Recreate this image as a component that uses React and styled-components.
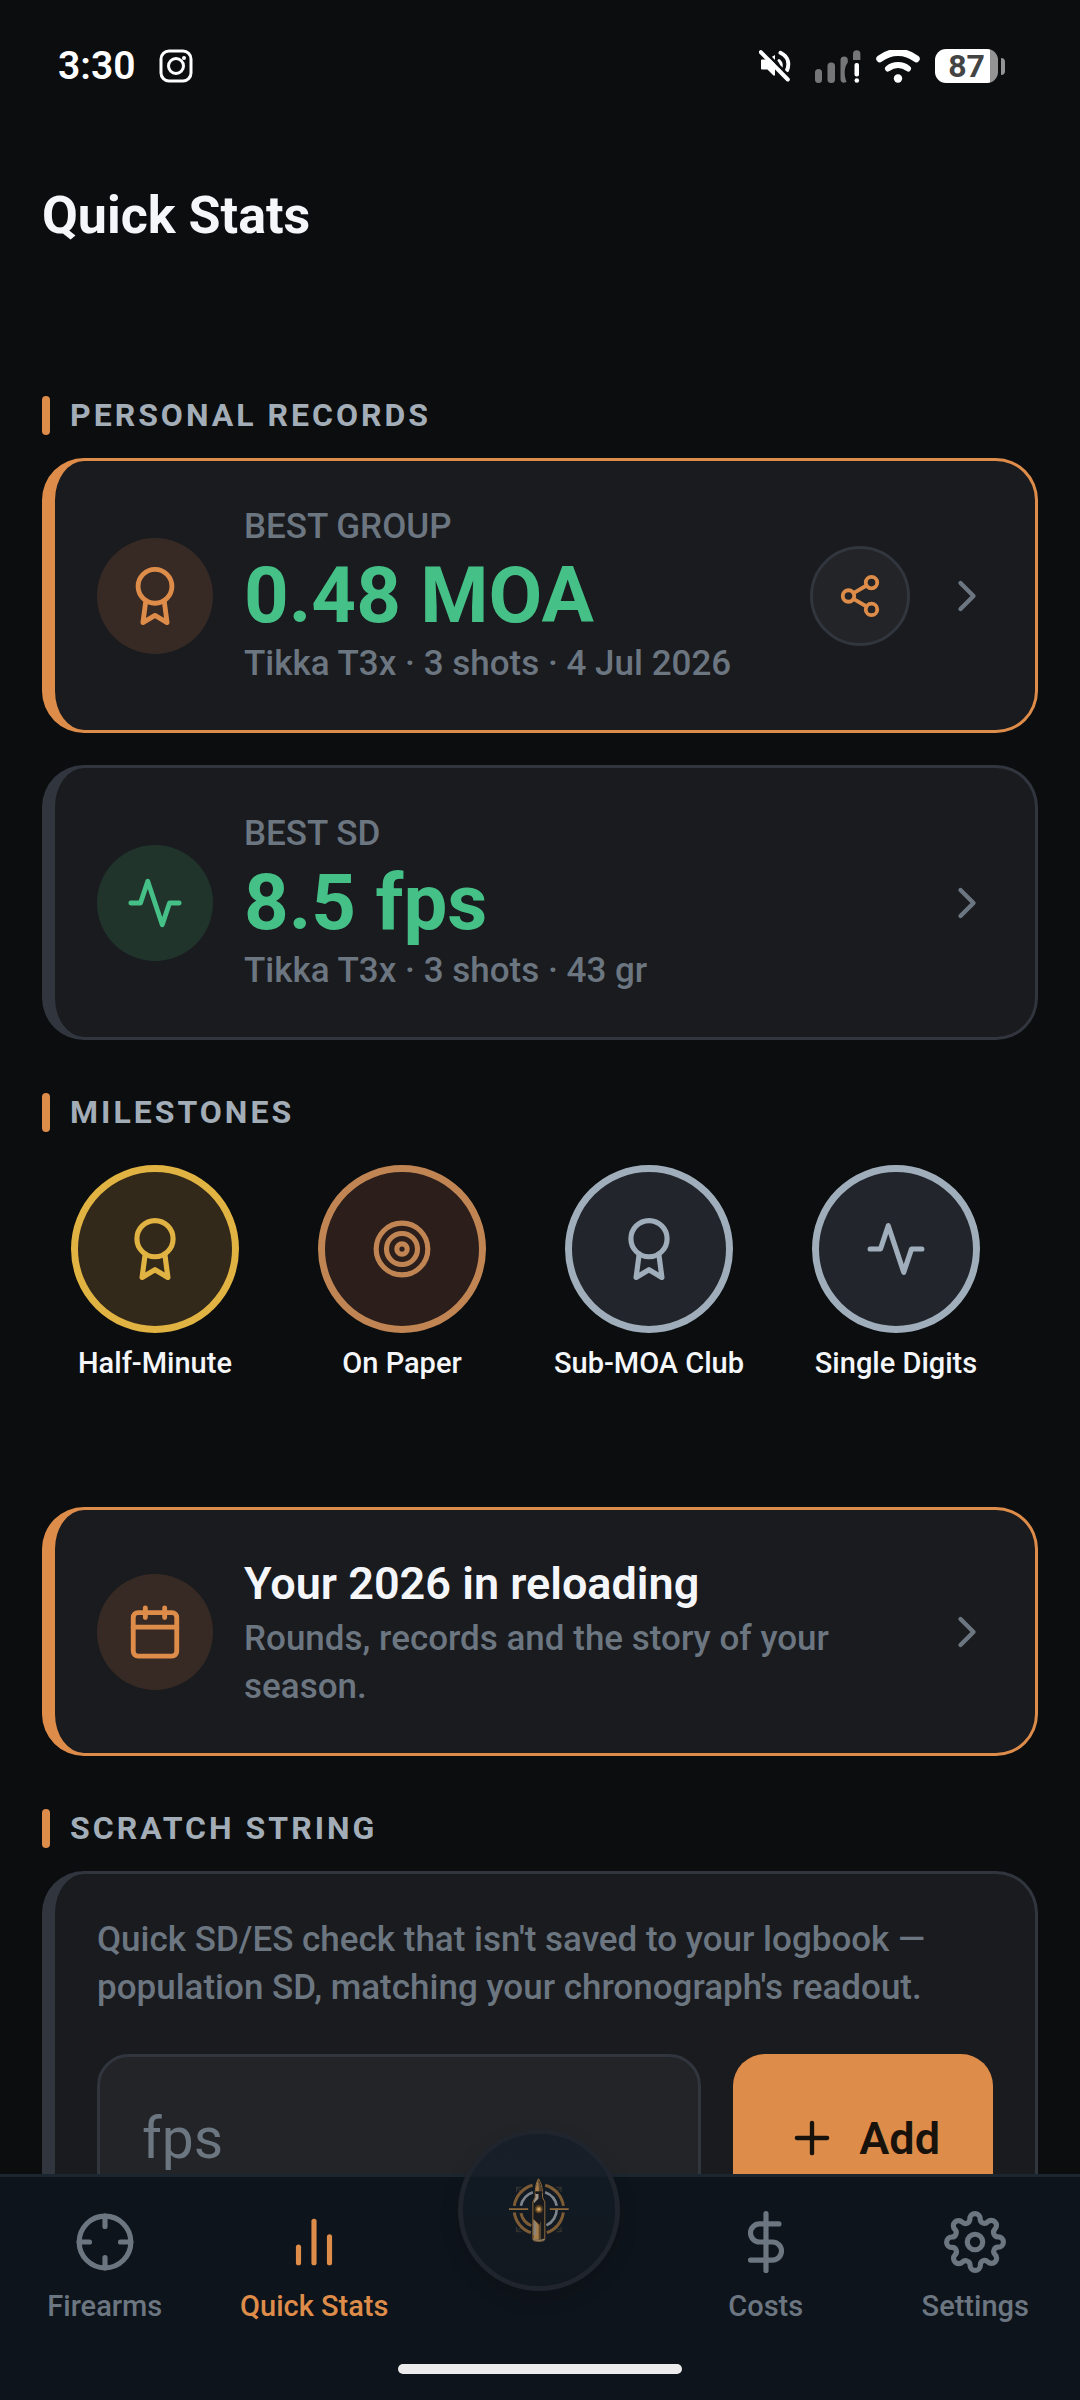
import React from 'react';
import styled, { createGlobalStyle } from 'styled-components';
import {
  FiActivity,
  FiAward,
  FiBarChart2,
  FiCalendar,
  FiChevronRight,
  FiCrosshair,
  FiDollarSign,
  FiPlus,
  FiSettings,
  FiShare2,
  FiTarget,
} from 'react-icons/fi';

const milestones = [
  { label: 'Half-Minute', icon: FiAward, color: '#e1b342', fill: '#33291a' },
  { label: 'On Paper', icon: FiTarget, color: '#c08552', fill: '#2b1e1b' },
  { label: 'Sub-MOA Club', icon: FiAward, color: '#a0aebc', fill: '#22262c' },
  { label: 'Single Digits', icon: FiActivity, color: '#a0aebc', fill: '#22262c' },
];

const InstagramGlyph = () => (
  <svg width="34" height="34" viewBox="0 0 34 34" fill="none" stroke="#fff" strokeWidth="3" aria-hidden="true">
    <rect x="2" y="2" width="30" height="30" rx="8" />
    <circle cx="17" cy="17" r="7.5" />
    <circle cx="25" cy="9" r="2" fill="#fff" stroke="none" />
  </svg>
);

const MutedGlyph = () => (
  <svg width="32" height="32" viewBox="0 0 32 32" fill="none" aria-hidden="true">
    <path d="M3 9.500h5.500L16 5v20.500h-1.500L8.500 19.500H3a1 1 0 0 1-1-1v-8a1 1 0 0 1 1-1z" fill="#fff" />
    <path d="M20 10.500a7 7 0 0 1 1.500 8" stroke="#fff" strokeWidth="3" strokeLinecap="round" />
    <path d="M21.500 2.800c7 3.500 9.500 10 6.500 17.500" stroke="#fff" strokeWidth="4" strokeLinecap="round" />
    <path d="M4 0L33 29" stroke="#0b0d0f" strokeWidth="3" />
    <path d="M1.800 2.200L28.800 29.500" stroke="#fff" strokeWidth="4" strokeLinecap="round" />
  </svg>
);

const SignalGlyph = () => (
  <svg width="46" height="33" viewBox="0 0 46 33" aria-hidden="true">
    <g fill="#757677">
      <rect x="0" y="19" width="7" height="14" rx="3.500" />
      <rect x="12.500" y="12.500" width="7.500" height="20.500" rx="3.500" />
      <path d="M25.500 9.500a3.700 3.700 0 0 1 7.300 0v3c-3.800 5-4 12-1.300 19.500-3.500 1.500-6 .500-6-3z" />
      <path d="M38 4a3.700 3.700 0 0 1 7.400 0v6H38z" />
    </g>
    <rect x="39.500" y="13" width="4.500" height="13.500" rx="2" fill="#fff" />
    <circle cx="41.800" cy="30.500" r="2.300" fill="#fff" />
  </svg>
);

const WifiGlyph = () => (
  <svg width="44" height="33" viewBox="0 0 44 33" fill="none" stroke="#fff" strokeLinecap="round" aria-hidden="true">
    <path d="M3.800 8.800a29 29 0 0 1 36.400 0" strokeWidth="7" />
    <path d="M12 18.500a16 16 0 0 1 20 0" strokeWidth="6" />
    <circle cx="22" cy="28.500" r="4.200" fill="#fff" stroke="none" />
  </svg>
);

const BulletLogo = () => (
  <svg width="60" height="64" viewBox="177 178 181 193" fill="none" aria-hidden="true">
    <g stroke="#3a3732" strokeWidth="3">
      <path d="M198 206l22 18M336 206l-22 18M198 340l22-18M336 340l-22-18" />
      <path d="M200 220v-14h14M334 220v-14h-14M200 326v14h14M334 326v14h-14" />
    </g>
    <g stroke="#7d5c35" strokeWidth="9">
      <path d="M193 262A75 75 0 0 1 248 200" />
      <path d="M286 200A75 75 0 0 1 341 262" />
      <path d="M193 282A75 75 0 0 0 243 343" />
      <path d="M291 343A75 75 0 0 0 341 282" />
      <path d="M213 284A55 55 0 0 0 244 322" />
    </g>
    <g stroke="#7d848b" strokeWidth="8">
      <path d="M213 262A55 55 0 0 1 249 221" />
      <path d="M286 221A55 55 0 0 1 321 262" />
      <path d="M321 270A55 55 0 0 1 290 321" />
    </g>
    <path d="M177 272h58M300 272h57" stroke="#8f6a3c" strokeWidth="5" />
    <path
      d="M266 180c-6 10-9 22-10 40v16l-7 14v112c0 5 6 7 18 7s18-2 18-7V250l-7-14v-16c-1-18-6-30-12-40z"
      fill="#17191c"
      stroke="#8f6a3c"
      strokeWidth="3"
    />
    <path d="M266 182c-5 10-8 22-9 37h11z" fill="#a67e4b" />
    <path d="M267 186c5 10 8 20 9 33h-9z" fill="#5d4730" />
    <path d="M256 221h22" stroke="#17191c" strokeWidth="4" />
    <path d="M257 226h9v14l-14 14v-6l5-12z" fill="#a0968a" />
    <path d="M251 302l16 16v46c-9 0-14-1-16-3z" fill="#a67e4b" />
    <path d="M251 306l8 10v34h-8z" fill="#8d8377" />
    <path d="M268 322l5-14v54h-5z" fill="#6d5230" />
    <path d="M250 363c8 4 26 4 34 0" stroke="#8f7a5c" strokeWidth="5" />
    <circle cx="267" cy="272" r="13" fill="#4a3820" />
    <circle cx="267" cy="272" r="8" fill="#9c733c" />
    <circle cx="267" cy="272" r="4" fill="#d1a869" />
  </svg>
);

const App = () => {
  return (
    <Screen>
      <GlobalStyle />

      <ScrollArea>
        <StatusBar>
          <StatusGroup>
            <Clock>3:30</Clock>
            <InstagramGlyph />
          </StatusGroup>
          <StatusIcons>
            <MutedGlyph />
            <SignalGlyph />
            <WifiGlyph />
            <Battery>
              <BatteryBody>87</BatteryBody>
              <BatteryTip />
            </Battery>
          </StatusIcons>
        </StatusBar>

        <Header>
          <PageTitle>Quick Stats</PageTitle>
        </Header>

        <Section>
          <SectionTitle>Personal Records</SectionTitle>
          <CardList>
            <Card $accent>
              <IconCircle $color="#de8c49" $fill="#372a24">
                <FiAward size={58} />
              </IconCircle>
              <CardBody>
                <Caption>BEST GROUP</Caption>
                <Value>0.48 MOA</Value>
                <Detail>Tikka T3x · 3 shots · 4 Jul 2026</Detail>
              </CardBody>
              <ShareButton type="button" aria-label="Share best group">
                <FiShare2 size={46} />
              </ShareButton>
              <Chevron size={52} />
            </Card>

            <Card>
              <IconCircle $color="#45c188" $fill="#20342c">
                <FiActivity size={58} />
              </IconCircle>
              <CardBody>
                <Caption>BEST SD</Caption>
                <Value>8.5 fps</Value>
                <Detail>Tikka T3x · 3 shots · 43 gr</Detail>
              </CardBody>
              <Chevron size={52} />
            </Card>
          </CardList>
        </Section>

        <Section>
          <SectionTitle>Milestones</SectionTitle>
          <MilestoneRow>
            {milestones.map(({ label, icon: Icon, color, fill }) => (
              <Milestone key={label}>
                <Medal $color={color} $fill={fill}>
                  <Icon size={62} />
                </Medal>
                <MilestoneLabel>{label}</MilestoneLabel>
              </Milestone>
            ))}
          </MilestoneRow>
        </Section>

        <Section>
          <Card $accent>
            <IconCircle $color="#de8c49" $fill="#372a24">
              <FiCalendar size={58} />
            </IconCircle>
            <CardBody>
              <CardTitle>Your 2026 in reloading</CardTitle>
              <Detail>Rounds, records and the story of your season.</Detail>
            </CardBody>
            <Chevron size={52} />
          </Card>
        </Section>

        <Section>
          <SectionTitle>Scratch String</SectionTitle>
          <ScratchCard>
            <Detail>
              Quick SD/ES check that isn't saved to your logbook — population SD, matching your chronograph's readout.
            </Detail>
            <EntryRow>
              <VelocityInput type="text" placeholder="fps" aria-label="Velocity in fps" />
              <AddButton type="button">
                <FiPlus size={52} />
                Add
              </AddButton>
            </EntryRow>
          </ScratchCard>
        </Section>
      </ScrollArea>

      <TabBar>
        <Tabs>
          <Tab href="#firearms">
            <FiCrosshair size={62} />
            Firearms
          </Tab>
          <Tab href="#stats" $active aria-current="page">
            <FiBarChart2 size={62} />
            Quick Stats
          </Tab>
          <CenterSlot>
            <HomeButton type="button" aria-label="Home">
              <BulletLogo />
            </HomeButton>
          </CenterSlot>
          <Tab href="#costs">
            <FiDollarSign size={62} />
            Costs
          </Tab>
          <Tab href="#settings">
            <FiSettings size={62} />
            Settings
          </Tab>
        </Tabs>
        <HomeIndicator />
      </TabBar>
    </Screen>
  );
};

const GlobalStyle = createGlobalStyle`
  * {
    box-sizing: border-box;
  }

  body {
    margin: 0;
    background: #0b0d0f;
    font-family: Roboto, 'Noto Sans', sans-serif;
  }

  h1, h2, h3, p {
    margin: 0;
  }

  button, input {
    font-family: inherit;
  }
`;

const Screen = styled.div`
  display: flex;
  flex-direction: column;
  height: 100vh;
  overflow: hidden;
`;

const ScrollArea = styled.main`
  flex: 1;
  min-height: 0;
  padding: 0 42px;
  overflow-y: auto;
  scrollbar-width: none;
`;

const StatusBar = styled.div`
  display: flex;
  align-items: center;
  justify-content: space-between;
  height: 132px;
  padding: 0 33px 0 16px;
`;

const StatusGroup = styled.div`
  display: flex;
  align-items: center;
  gap: 24px;
`;

const StatusIcons = styled(StatusGroup)`
  gap: 15px;

  svg:first-child {
    margin-right: 9px;
  }
`;

const Clock = styled.span`
  color: #fff;
  font-size: 39px;
  font-weight: 600;
  line-height: 44px;
`;

const Battery = styled.div`
  display: flex;
  align-items: center;
  gap: 3px;
`;

const BatteryBody = styled.div`
  width: 63px;
  height: 34px;
  border-radius: 11px;
  background: linear-gradient(90deg, #fff 87%, #949494 87%);
  color: #444;
  font-size: 32px;
  font-weight: 700;
  line-height: 34px;
  text-align: center;
`;

const BatteryTip = styled.div`
  width: 4px;
  height: 17px;
  border-radius: 0 4px 4px 0;
  background: #949494;
`;

const Header = styled.header`
  padding: 52px 0 95px;
`;

const PageTitle = styled.h1`
  color: #f4f6f9;
  font-size: 52px;
  font-weight: 700;
  line-height: 64px;
`;

const Section = styled.section`
  padding-top: 53px;
`;

const SectionTitle = styled.h2`
  display: flex;
  align-items: center;
  gap: 20px;
  margin-bottom: 23px;
  color: #a3adb8;
  font-size: 32px;
  font-weight: 700;
  line-height: 39px;
  letter-spacing: 3px;
  text-transform: uppercase;

  &::before {
    content: '';
    width: 8px;
    height: 39px;
    border-radius: 4px;
    background: #de8c49;
  }
`;

const CardList = styled.div`
  display: flex;
  flex-direction: column;
  gap: 32px;
`;

const Card = styled.article`
  display: flex;
  align-items: center;
  gap: 31px;
  padding: 42px;
  border: 3px solid ${({ $accent }) => ($accent ? '#de8c49' : '#31353e')};
  border-left-width: 13px;
  border-radius: 42px;
  background: #191b1f;
`;

const ScratchCard = styled(Card)`
  flex-direction: column;
  align-items: stretch;
  gap: 42px;
`;

const IconCircle = styled.div`
  display: flex;
  flex: none;
  align-items: center;
  justify-content: center;
  width: 116px;
  height: 116px;
  border-radius: 50%;
  background: ${({ $fill }) => $fill};
  color: ${({ $color }) => $color};
`;

const CardBody = styled.div`
  flex: 1;
  min-width: 0;
`;

const Caption = styled.h3`
  color: #6c7681;
  font-size: 35px;
  font-weight: 500;
  line-height: 48px;
`;

const Value = styled.p`
  color: #45c188;
  font-size: 78px;
  font-weight: 700;
  line-height: 89px;
`;

const Detail = styled.p`
  color: #6c7681;
  font-size: 35px;
  font-weight: 500;
  line-height: 48px;
`;

const CardTitle = styled.h3`
  color: #f4f6f9;
  font-size: 45px;
  font-weight: 600;
  line-height: 63px;
`;

const ShareButton = styled.button`
  display: flex;
  flex: none;
  align-items: center;
  justify-content: center;
  width: 100px;
  height: 100px;
  padding: 0;
  border: 3px solid #31353e;
  border-radius: 50%;
  background: #222427;
  color: #de8c49;
`;

const Chevron = styled(FiChevronRight)`
  flex: none;
  color: #6c7681;
`;

const MilestoneRow = styled.div`
  display: flex;
  gap: 21px;
  padding: 10px 0 73px;
  overflow: hidden;
`;

const Milestone = styled.div`
  display: flex;
  flex: none;
  flex-direction: column;
  align-items: center;
  gap: 12px;
  width: 226px;
`;

const Medal = styled.div`
  display: flex;
  align-items: center;
  justify-content: center;
  width: 168px;
  height: 168px;
  border: 7px solid ${({ $color }) => $color};
  border-radius: 50%;
  background: ${({ $fill }) => $fill};
  color: ${({ $color }) => $color};
`;

const MilestoneLabel = styled.span`
  color: #f4f6f9;
  font-size: 29px;
  font-weight: 500;
  line-height: 36px;
  white-space: nowrap;
`;

const EntryRow = styled.div`
  display: flex;
  gap: 32px;
`;

const VelocityInput = styled.input`
  flex: 1;
  min-width: 0;
  height: 168px;
  padding: 0 42px;
  border: 3px solid #31353e;
  border-radius: 32px;
  background: #222427;
  color: #f4f6f9;
  font-size: 57px;

  &::placeholder {
    color: #6c7681;
  }
`;

const AddButton = styled.button`
  display: flex;
  flex: none;
  align-items: center;
  justify-content: center;
  gap: 21px;
  padding: 0 53px;
  border: 0;
  border-radius: 32px;
  background: #de8c49;
  color: #17120c;
  font-size: 45px;
  font-weight: 600;
`;

const TabBar = styled.nav`
  flex: none;
  padding-bottom: 26px;
  border-top: 3px solid #1c2630;
  background: #0e141b;
`;

const Tabs = styled.div`
  display: flex;
  height: 187px;
  padding-top: 34px;
`;

const Tab = styled.a`
  display: flex;
  flex: 1;
  flex-direction: column;
  align-items: center;
  gap: 16px;
  color: ${({ $active }) => ($active ? '#de8c49' : '#6c7681')};
  font-size: 29px;
  font-weight: 500;
  line-height: 34px;
  text-decoration: none;
`;

const CenterSlot = styled.div`
  position: relative;
  flex: none;
  width: 242px;
`;

const HomeButton = styled.button`
  position: absolute;
  top: -82px;
  left: 39px;
  display: flex;
  align-items: center;
  justify-content: center;
  width: 162px;
  height: 162px;
  padding: 0;
  border: 5px solid #20252d;
  border-radius: 50%;
  background: linear-gradient(180deg, #181e28 0%, #171f29 27%, #111a23 29%, #121820 100%);
  box-shadow: 0 8px 20px rgba(0, 0, 0, 0.12);
`;

const HomeIndicator = styled.div`
  width: 284px;
  height: 10px;
  margin: 0 auto;
  border-radius: 5px;
  background: #ececec;
`;

export default App;
